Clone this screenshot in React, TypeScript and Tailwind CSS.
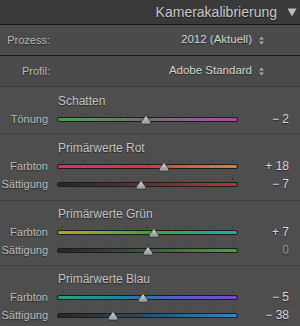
import React from "react";

type SliderDef = { label: string; value: number; track: string };
type SectionDef = { title: string; className: string; sliders: SliderDef[] };

const SECTIONS: SectionDef[] = [
  {
    title: "Schatten",
    className: "pt-[5px] pb-[5px]",
    sliders: [
      { label: "Tönung", value: -2, track: "bg-linear-to-r from-[#43a047] via-[#6f6f6f] to-[#b03fb3]" },
    ],
  },
  {
    title: "Primärwerte Rot",
    className: "pt-[5px] pb-[7px]",
    sliders: [
      { label: "Farbton", value: 18, track: "bg-linear-to-r from-[#d8307e] via-[#d83646] to-[#d48234]" },
      { label: "Sättigung", value: -7, track: "bg-linear-to-r from-[#262626] via-[#5a3535] to-[#b83434]" },
    ],
  },
  {
    title: "Primärwerte Grün",
    className: "pt-[4px] pb-[6px]",
    sliders: [
      { label: "Farbton", value: 7, track: "bg-linear-to-r from-[#b0a524] via-[#38a53c] to-[#22a9a2]" },
      { label: "Sättigung", value: 0, track: "bg-linear-to-r from-[#262626] via-[#3b5a3c] to-[#3caa44]" },
    ],
  },
  {
    title: "Primärwerte Blau",
    className: "pt-[4px] pb-[4px]",
    sliders: [
      { label: "Farbton", value: -5, track: "bg-linear-to-r from-[#2aa37a] via-[#2a6fb5] to-[#7a48c4]" },
      { label: "Sättigung", value: -38, track: "bg-linear-to-r from-[#262626] via-[#28506a] to-[#2a8ec0]" },
    ],
  },
];

const TICKS = [0, 1, 2, 3, 4, 5, 6, 7, 8];

function formatValue(v: number) {
  if (v > 0) return `+ ${v}`;
  if (v < 0) return `− ${Math.abs(v)}`;
  return "0";
}

function Thumb() {
  return (
    <svg width="11" height="10" viewBox="0 0 11 10">
      <defs>
        <linearGradient id="thumbFill" x1="0" y1="0" x2="0" y2="1">
          <stop offset="0" stopColor="#d6d6d6" />
          <stop offset="1" stopColor="#8e8e8e" />
        </linearGradient>
      </defs>
      <path
        d="M5.5 0.8 C6.4 0.8 7 2.6 8.2 4.2 C9.4 5.6 10.3 6.4 10.3 7.6 C10.3 8.7 9.6 9.3 8.6 9.3 L2.4 9.3 C1.4 9.3 0.7 8.7 0.7 7.6 C0.7 6.4 1.6 5.6 2.8 4.2 C4 2.6 4.6 0.8 5.5 0.8 Z"
        fill="url(#thumbFill)"
        stroke="#2a2a2a"
        strokeWidth="0.8"
      />
    </svg>
  );
}

function SliderRow({ s }: { s: SliderDef }) {
  const pos = ((s.value + 100) / 200) * 100;
  return (
    <div className="flex items-center h-[18px]">
      <div className="w-[48px] text-right text-[11px] text-[#bdbdbd] [text-shadow:0_1px_1px_rgba(0,0,0,0.55)] whitespace-nowrap">
        {s.label}
      </div>
      <div className="relative ml-[9px] w-[181px] h-[5px] rounded-full bg-[#1c1c1c] p-[1px]">
        {TICKS.map((i) => (
          <div
            key={i}
            className="absolute top-[-4px] w-[1px] h-[2px] bg-[#383838]"
            style={{ left: 5 + i * 21.3 }}
          />
        ))}
        <div className={`h-full rounded-full ${s.track}`} />
        <div className="absolute top-[-2px] -translate-x-1/2" style={{ left: `${pos}%` }}>
          <Thumb />
        </div>
      </div>
      <div
        className={`flex-1 text-right pr-[11px] text-[12px] [text-shadow:0_1px_1px_rgba(0,0,0,0.55)] ${
          s.value === 0 ? "text-[#9a9a9a]" : "text-[#dadada]"
        }`}
      >
        {formatValue(s.value)}
      </div>
    </div>
  );
}

function UpDown() {
  return (
    <svg width="7" height="9" viewBox="0 0 7 9" className="ml-[6px]">
      <path d="M3.5 0.5 L6 3.5 L1 3.5 Z" fill="#a8a8a8" />
      <path d="M3.5 8.5 L6 5.5 L1 5.5 Z" fill="#a8a8a8" />
    </svg>
  );
}

export default function App() {
  return (
    <div className="w-[300px] h-[326px] overflow-hidden bg-[#4e4e4e] font-['Liberation_Sans',Arial,sans-serif]">
      {/* panel header */}
      <div className="h-[25px] bg-[#3a3a3a] border-b border-[#141414] flex items-center justify-end pr-[3px]">
        <span className="text-[14px] text-[#c9c9c9] [text-shadow:0_1px_1px_rgba(0,0,0,0.6)]">Kamerakalibrierung</span>
        <svg width="10" height="9" viewBox="0 0 10 9" className="ml-[10px]">
          <path d="M0.5 0.5 L9.5 0.5 L5 8.5 Z" fill="#bdbdbd" />
        </svg>
      </div>

      {/* process / profile */}
      <div className="h-[31px] bg-[#4b4b4b] border-b border-[#161616] flex items-center">
        <div className="w-[50px] text-right text-[11px] text-[#bdbdbd] [text-shadow:0_1px_1px_rgba(0,0,0,0.55)]">Prozess:</div>
        <div className="flex-1 flex items-center justify-end pr-[35px] text-[11.5px] text-[#d6d6d6] [text-shadow:0_1px_1px_rgba(0,0,0,0.55)]">
          2012 (Aktuell)
          <UpDown />
        </div>
      </div>
      <div className="h-[31px] bg-[#4b4b4b] border-b border-[#3a3a3a] flex items-center">
        <div className="w-[50px] text-right text-[11px] text-[#bdbdbd] [text-shadow:0_1px_1px_rgba(0,0,0,0.55)]">Profil:</div>
        <div className="flex-1 flex items-center justify-end pr-[35px] text-[11.5px] text-[#d6d6d6] [text-shadow:0_1px_1px_rgba(0,0,0,0.55)]">
          Adobe Standard
          <UpDown />
        </div>
      </div>

      {SECTIONS.map((sec, idx) => (
        <div key={sec.title} className={`${sec.className} ${idx > 0 ? "border-t border-[#3e3e3e]" : ""}`}>
          <div className="h-[18px] flex items-center pl-[58px] text-[12px] text-[#c4c4c4] [text-shadow:0_1px_1px_rgba(0,0,0,0.55)]">
            {sec.title}
          </div>
          {sec.sliders.map((s) => (
            <SliderRow key={sec.title + s.label} s={s} />
          ))}
        </div>
      ))}
    </div>
  );
}
